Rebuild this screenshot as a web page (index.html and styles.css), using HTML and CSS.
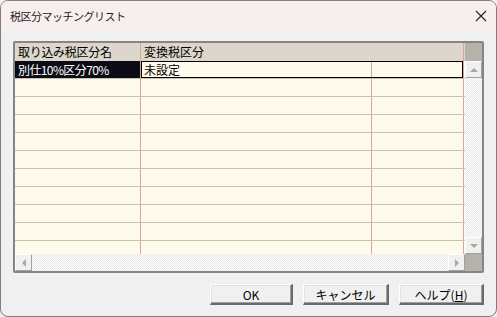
FILE: index.html
```html
<!DOCTYPE html>
<html lang="ja">
<head>
    <meta charset="UTF-8">
    <meta name="viewport" content="width=device-width, initial-scale=1.0">
    <title>税区分マッチングリスト</title>
    <link rel="stylesheet" href="styles.css">
</head>
<body>

<div class="window">
    <div class="titlebar">
        <span class="title">税区分マッチングリスト</span>
        <svg class="close" width="12" height="12" viewBox="0 0 12 12">
            <path d="M1 1 L11 11 M11 1 L1 11" stroke="#222" stroke-width="1.1" fill="none"/>
        </svg>
    </div>

    <div class="content">
        <div class="grid">
            <div class="cells">
                <div class="row head">
                    <div class="c c1">取り込み税区分名</div>
                    <div class="c c2">変換税区分</div>
                    <div class="c c3"></div>
                </div>
                <div class="row sel">
                    <div class="c c1"><span class="narrow">別仕10%区分70%</span></div>
                    <div class="c c2">未設定</div>
                    <div class="c c3"></div>
                    <div class="focus"></div>
                </div>
                <div class="row"><div class="c c1"></div><div class="c c2"></div><div class="c c3"></div></div>
                <div class="row"><div class="c c1"></div><div class="c c2"></div><div class="c c3"></div></div>
                <div class="row"><div class="c c1"></div><div class="c c2"></div><div class="c c3"></div></div>
                <div class="row"><div class="c c1"></div><div class="c c2"></div><div class="c c3"></div></div>
                <div class="row"><div class="c c1"></div><div class="c c2"></div><div class="c c3"></div></div>
                <div class="row"><div class="c c1"></div><div class="c c2"></div><div class="c c3"></div></div>
                <div class="row"><div class="c c1"></div><div class="c c2"></div><div class="c c3"></div></div>
                <div class="row"><div class="c c1"></div><div class="c c2"></div><div class="c c3"></div></div>
                <div class="row"><div class="c c1"></div><div class="c c2"></div><div class="c c3"></div></div>
                <div class="row part"><div class="c c1"></div><div class="c c2"></div><div class="c c3"></div></div>
            </div>

            <div class="vscroll">
                <div class="vhead"></div>
                <div class="sbtn"><span class="arrow up"></span></div>
                <div class="track"></div>
                <div class="sbtn"><span class="arrow down"></span></div>
            </div>

            <div class="hscroll">
                <div class="sbtn"><span class="arrow left"></span></div>
                <div class="track"></div>
                <div class="sbtn"><span class="arrow right"></span></div>
            </div>

            <div class="corner"></div>
        </div>

        <div class="buttons">
            <button class="btn ok">OK</button>
            <button class="btn cancel">キャンセル</button>
            <button class="btn help">ヘルプ(<u>H</u>)</button>
        </div>
    </div>
</div>

</body>
</html>
```

FILE: styles.css
```css
body { margin: 0; background-color: #f0f0f0; font-family: "Noto Sans CJK JP", "Noto Sans", sans-serif; }
.window { width: 497px; height: 317px; box-sizing: border-box; border: 1px solid #7f7f7f; border-radius: 8px; overflow: hidden; background-color: #f0f0f0; display: flex; flex-direction: column; }
.titlebar { height: 29px; background-color: #f8eeee; display: flex; align-items: center; justify-content: space-between; padding: 0 9px 0 9px; }
.title { font-size: 11px; letter-spacing: -0.5px; color: #1b1b1b; }
.close { display: block; }

.content { flex: 1; padding: 11px 12px 0 12px; display: flex; flex-direction: column; }
.grid { width: 467px; border: 2px solid #858585; border-radius: 2px; display: grid; grid-template-columns: 450px 17px; grid-template-rows: 211px 17px; background-color: #fffbec; }

.cells { display: flex; flex-direction: column; overflow: hidden; }
.row { display: flex; height: 17px; border-bottom: 1px solid #c9c0b3; position: relative; flex-shrink: 0; }
.row.head { height: 18px; border-bottom: none; background-color: #dcd6cc; }
.row.part { height: 13px; border-bottom: none; }
.c { height: 100%; box-sizing: border-box; font-size: 12px; line-height: 17px; padding-left: 3px; color: #000; white-space: nowrap; overflow: hidden; }
.c1 { width: 126px; border-right: 1px solid #dfa497; }
.c2 { width: 231px; border-right: 1px solid #dfa497; }
.c3 { width: 92px; border-right: 1px solid #dfa497; }
.head .c { line-height: 18px; }
.head .c1 { letter-spacing: -0.3px; }
.head .c2 { border-right-color: #dcd6cc; }
.sel .c1 { background-color: #0b0b16; color: #fff; }
.sel .c2 { border-right-color: #c8aaa0; }
.narrow { letter-spacing: -0.6px; }
.focus { position: absolute; left: 126px; top: 0; width: 322px; height: 17px; box-sizing: border-box; border: 1.5px solid #000; }

.vscroll { display: flex; flex-direction: column; background: repeating-conic-gradient(#eaeaea 0 25%, #fbfbfb 0 50%) 0 0 / 2px 2px; }
.vhead { height: 18px; background-color: #b6b2aa; }
.track { flex: 1; }
.hscroll { display: flex; background: repeating-conic-gradient(#eaeaea 0 25%, #fbfbfb 0 50%) 0 0 / 2px 2px; }
.corner { background-color: #b6b2aa; }

.sbtn { width: 17px; height: 17px; box-sizing: border-box; background-color: #f0f0f0; border-top: 1px solid #ffffff; border-left: 1px solid #ffffff; border-right: 1px solid #a0a0a0; border-bottom: 1px solid #a0a0a0; display: flex; align-items: center; justify-content: center; flex-shrink: 0; }
.arrow { width: 0; height: 0; border: 4px solid transparent; }
.arrow.up { border-bottom-color: #a8a8a8; border-top-width: 0; }
.arrow.down { border-top-color: #a8a8a8; border-bottom-width: 0; }
.arrow.left { border-right-color: #a8a8a8; border-left-width: 0; }
.arrow.right { border-left-color: #a8a8a8; border-right-width: 0; }

.buttons { display: flex; justify-content: flex-end; gap: 10px; margin-top: 11px; }
.btn { height: 21px; box-sizing: border-box; background-color: #f0f0f0; border-top: 1px solid #ffffff; border-left: 1px solid #ffffff; border-right: 2px solid #6a6a6a; border-bottom: 2px solid #6a6a6a; box-shadow: inset -1px -1px 0 #a0a0a0, inset 1px 1px 0 #e3e3e3; font-family: "Noto Sans CJK JP", "Noto Sans", sans-serif; font-size: 12px; color: #000; padding: 0; line-height: 17px; }
.btn.ok { width: 83px; }
.btn.cancel { width: 86px; }
.btn.help { width: 85px; }
```
